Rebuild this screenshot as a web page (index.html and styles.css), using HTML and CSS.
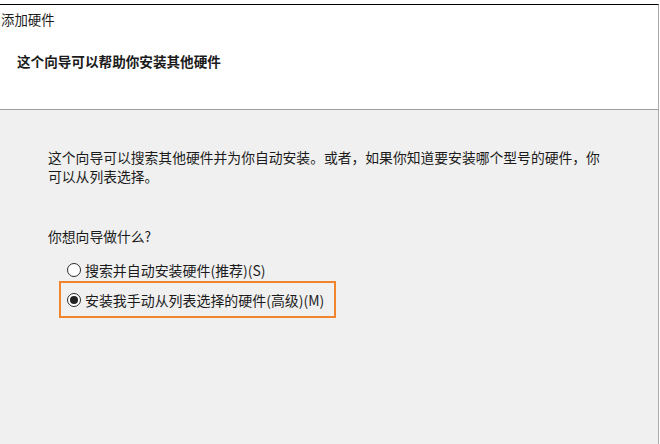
FILE: index.html
```html
<!DOCTYPE html>
<html lang="zh-CN">
<head>
<meta charset="utf-8">
<title>添加硬件</title>
<link rel="stylesheet" href="styles.css">
</head>
<body>
<div class="frame">
  <div class="header">
    <div class="title">添加硬件</div>
    <div class="subtitle">这个向导可以帮助你安装其他硬件</div>
  </div>
  <div class="content">
    <p class="intro">这个向导可以搜索其他硬件并为你自动安装。或者，如果你知道要安装哪个型号的硬件，你<br>可以从列表选择。</p>
    <p class="question">你想向导做什么?</p>
    <div class="options">
      <label class="option">
        <span class="radio"></span>
        <span class="label">搜索并自动安装硬件(推荐)(S)</span>
      </label>
      <label class="option option-selected">
        <span class="radio radio-on"></span>
        <span class="label">安装我手动从列表选择的硬件(高级)(M)</span>
      </label>
    </div>
  </div>
</div>
</body>
</html>
```

FILE: styles.css
```css
html, body {
  margin: 0;
  padding: 0;
  background: #ffffff;
}
body {
  font-family: "Noto Sans CJK SC", "Microsoft YaHei", sans-serif;
  color: #1b1b1b;
  font-size: 13.8px;
  width: 660px;
  height: 444px;
  overflow: hidden;
}
.frame {
  margin-top: 4px;
  width: 659px;
  height: 440px;
  box-sizing: border-box;
  border-top: 1px solid #000000;
  border-right: 1px solid #a9a9a9;
  display: flex;
  flex-direction: column;
}
.header {
  height: 105px;
  flex: none;
  background: #ffffff;
  border-bottom: 1px solid #a0a0a0;
  box-shadow: 0 1px 0 #d8d8d8;
  box-sizing: border-box;
  padding-top: 4px;
}
.title {
  line-height: 20px;
  padding-left: 1px;
  font-size: 13.4px;
}
.subtitle {
  margin-top: 22px;
  line-height: 20px;
  padding-left: 17px;
  font-weight: bold;
  font-size: 13.6px;
}
.content {
  flex: 1;
  background: #f0f0f0;
  padding-top: 38px;
  padding-left: 48px;
}
.intro {
  margin: 0;
  line-height: 19px;
}
.question {
  margin: 41px 0 0 0;
  line-height: 19px;
}
.options {
  margin-top: 13px;
  margin-left: 11px;
  display: flex;
  flex-direction: column;
}
.option {
  display: flex;
  align-items: center;
  gap: 5px;
  box-sizing: border-box;
  width: 277px;
  height: 22px;
  padding-left: 6px;
  border-left: 2px solid transparent;
  border-right: 2px solid transparent;
  font-size: 13.95px;
}
.option-selected {
  height: 37px;
  border: 2px solid #f0852d;
}
.radio {
  width: 14px;
  height: 14px;
  box-sizing: border-box;
  border: 1px solid #2a2a2a;
  border-radius: 50%;
  background: #ffffff;
  flex: none;
  display: flex;
  align-items: center;
  justify-content: center;
}
.radio-on::after {
  content: "";
  width: 8px;
  height: 8px;
  border-radius: 50%;
  background: #222222;
}
.label {
  white-space: nowrap;
  margin-left: -1px;
}
```
